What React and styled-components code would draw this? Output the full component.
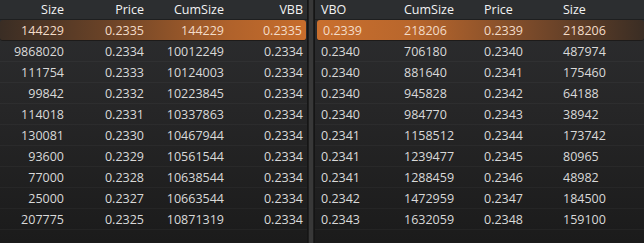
import React from "react"
import styled, { createGlobalStyle, css } from "styled-components"

const bids = [
    ["144229", "0.2335", "144229", "0.2335"],
    ["9868020", "0.2334", "10012249", "0.2334"],
    ["111754", "0.2333", "10124003", "0.2334"],
    ["99842", "0.2332", "10223845", "0.2334"],
    ["114018", "0.2331", "10337863", "0.2334"],
    ["130081", "0.2330", "10467944", "0.2334"],
    ["93600", "0.2329", "10561544", "0.2334"],
    ["77000", "0.2328", "10638544", "0.2334"],
    ["25000", "0.2327", "10663544", "0.2334"],
    ["207775", "0.2325", "10871319", "0.2334"],
]

const asks = [
    ["0.2339", "218206", "0.2339", "218206"],
    ["0.2340", "706180", "0.2340", "487974"],
    ["0.2340", "881640", "0.2341", "175460"],
    ["0.2340", "945828", "0.2342", "64188"],
    ["0.2340", "984770", "0.2343", "38942"],
    ["0.2341", "1158512", "0.2344", "173742"],
    ["0.2341", "1239477", "0.2345", "80965"],
    ["0.2341", "1288459", "0.2346", "48982"],
    ["0.2342", "1472959", "0.2347", "184500"],
    ["0.2343", "1632059", "0.2348", "159100"],
]

const App = () => {
    return (
        <>
            <GlobalStyle />
            <Board>
                <Side side="bid">
                    <Row side="bid" header>
                        <span>Size</span>
                        <span>Price</span>
                        <span>CumSize</span>
                        <span>VBB</span>
                    </Row>
                    {bids.map((r, i) => (
                        <Row side="bid" key={i} best={i === 0}>
                            {r.map((c, j) => (
                                <span key={j}>{c}</span>
                            ))}
                        </Row>
                    ))}
                </Side>
                <Divider />
                <Side side="ask">
                    <Row side="ask" header>
                        <span>VBO</span>
                        <span>CumSize</span>
                        <span>Price</span>
                        <span>Size</span>
                    </Row>
                    {asks.map((r, i) => (
                        <Row side="ask" key={i} best={i === 0}>
                            {r.map((c, j) => (
                                <span key={j}>{c}</span>
                            ))}
                        </Row>
                    ))}
                </Side>
            </Board>
        </>
    )
}

export default App

const GlobalStyle = createGlobalStyle`
  html, body {
    margin: 0;
    padding: 0;
    background: #1c1c1c;
  }
  body {
    font-family: "Open Sans", "Noto Sans", sans-serif;
  }
`

const Board = styled.div`
  display: flex;
  width: 644px;
  height: 243px;
  background: linear-gradient(#2d2e30 0%, #262627 45%, #1b1b1b 100%);
  overflow: hidden;
`

const Side = styled.div`
  display: flex;
  flex-direction: column;
  width: ${p => (p.side === "bid" ? "307px" : "329px")};
`

const Divider = styled.div`
  width: 8px;
  display: flex;
  justify-content: center;
  border-left: 1px solid #151515;
  border-right: 1px solid #151515;
  box-sizing: border-box;
  background: #1e1e1e;
  &::before {
    content: "";
    width: 4px;
    background: #383838;
  }
`

const columns = {
    bid: "68px 80px 80px 79px",
    bidBest: "68px 80px 80px 78px",
    ask: "83px 80px 79px 87px",
    askBest: "81px 80px 79px 87px",
}

const Row = styled.div`
  display: grid;
  grid-template-columns: ${p => columns[p.side + (p.best ? "Best" : "")]};
  align-items: center;
  height: ${p => (p.header ? "20px" : "21px")};
  box-sizing: border-box;
  font-size: 12.5px;
  color: ${p => (p.header ? "#f2f2f2" : "#d9d9d9")};
  border-bottom: 1px solid ${p => (p.header ? "#1e1f20" : "rgba(255,255,255,0.035)")};
  ${p => p.header && css`
    background: #2c2e30;
  `}
  span {
    white-space: nowrap;
    text-align: ${p => (p.side === "bid" ? "right" : "left")};
    padding: ${p => (p.side === "bid" ? "0 4px 0 0" : "0 0 0 6px")};
  }
  ${p => p.best && css`
    color: #f3dcc8;
    border-radius: 3px;
    border-bottom: 1px solid #1d1b1a;
    background: ${p.side === "bid"
            ? "linear-gradient(90deg, #3a2d24 0%, #6b4327 35%, #b0622b 75%, #c76d2c 100%)"
            : "linear-gradient(90deg, #c96f2e 0%, #b8662c 30%, #7a4a2a 65%, #3a2d24 100%)"};
    margin: ${p.side === "bid" ? "0 1px 0 0" : "0 0 0 2px"};
  `}
`
